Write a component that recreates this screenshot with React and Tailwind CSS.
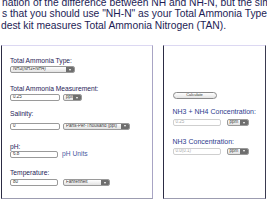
import React from "react";

const font = { fontFamily: '"Liberation Sans", Arial, sans-serif' };

function Select({ text, w, className = "" }) {
  return (
    <div
      className={`flex h-[7px] items-stretch overflow-hidden rounded-[2px] border border-[#9a9a9a] bg-gradient-to-b from-white to-[#e2e2e2] ${className}`}
      style={{ width: w }}
    >
      <div className="flex flex-1 items-center overflow-hidden whitespace-nowrap pl-[2px] text-[4.5px] leading-none text-[#333]">
        {text}
      </div>
      <div className="flex w-[8px] items-center justify-center bg-[#6e6e6e]">
        <div className="h-0 w-0 border-x-[1.5px] border-t-[2px] border-x-transparent border-t-white" />
      </div>
    </div>
  );
}

function Input({ text, w, disabled, className = "" }) {
  return (
    <div
      className={`flex h-[7px] items-center overflow-hidden rounded-[2px] border bg-white pl-[2px] text-[4.5px] leading-none ${
        disabled ? "border-[#cfcfcf] text-[#aaa]" : "border-[#9a9a9a] text-[#333]"
      } ${className}`}
      style={{ width: w }}
    >
      {text}
    </div>
  );
}

function Label({ children, className = "" }) {
  return (
    <div className={`whitespace-nowrap text-[6.7px] leading-[8px] text-[#1e2258] ${className}`}>
      {children}
    </div>
  );
}

function Heading({ children, className = "" }) {
  return (
    <div className={`whitespace-nowrap text-[7px] leading-[8px] text-[#2d3c8e] ${className}`}>
      {children}
    </div>
  );
}

export default function App() {
  return (
    <div className="relative h-[200px] w-[267px] overflow-hidden bg-white" style={font}>
      <div className="mt-[-3.3px] h-[48.3px] whitespace-nowrap text-[10.3px] leading-[11.5px] text-[#1d1d55]">
        <div className="ml-[2px]">nation of the difference between NH and NH-N, but the simple</div>
        <div className="ml-[2px]">s that you should use "NH-N" as your Total Ammonia Type</div>
        <div className="ml-[1px]">dest kit measures Total Ammonia Nitrogen (TAN).</div>
      </div>
      <div className="flex">
        <div className="ml-[1px] h-[154px] w-[152px] border-b border-l border-r border-t border-b-[#9c9cb0] border-l-[#2c2c44] border-r-[#a8a4c4] border-t-[#dcd8f2] pl-[8px]">
          <Label className="mt-[10.5px]">Total Ammonia Type:</Label>
          <Select text="NH3(NH3+NH4)" w={65} className="mt-[1.5px]" />
          <Label className="mt-[11.5px]">Total Ammonia Measurement:</Label>
          <div className="mt-[1.5px] flex gap-[3px]">
            <Input text="0.25" w={50} />
            <Select text="ppm" w={19} />
          </div>
          <Label className="mt-[8.5px]">Salinity:</Label>
          <div className="mt-[5px] flex gap-[3px]">
            <Input text="0" w={50} />
            <Select text="Parts-Per-Thousand (ppt)" w={67} />
          </div>
          <Label className="mt-[13.5px]">pH:</Label>
          <div className="flex items-center gap-[4px]">
            <Input text="6.8" w={48} />
            <span className="text-[6.7px] leading-none text-[#4b5aa2]">pH Units</span>
          </div>
          <Label className="mt-[11px]">Temperature:</Label>
          <div className="mt-[2px] flex gap-[5px]">
            <Input text="80" w={48} />
            <Select text="Fahrenheit" w={47} />
          </div>
        </div>
        <div className="ml-[10px] h-[154px] w-[103px] border-b border-l border-r border-t border-b-[#9c9cb0] border-l-[#2c2c44] border-r-[#3a3a50] border-t-[#dcd8f2] pl-[8.5px]">
          <div className="mt-[45.5px] flex h-[7px] w-[44px] items-center justify-center rounded-full border border-[#8a8a8a] bg-gradient-to-b from-white to-[#e4e4e4] text-[4px] leading-none text-[#333]">
            Calculate
          </div>
          <Heading className="mt-[9.5px]">NH3 + NH4 Concentration:</Heading>
          <div className="mt-[3px] flex gap-[6px]">
            <Input text="0.25" w={48} disabled />
            <Select text="ppm" w={22} />
          </div>
          <Heading className="mt-[11.5px]">NH3 Concentration:</Heading>
          <div className="mt-[2px] flex gap-[6px]">
            <Input text="0.0(0.1)" w={48} disabled />
            <Select text="ppm" w={22} />
          </div>
        </div>
      </div>
    </div>
  );
}
